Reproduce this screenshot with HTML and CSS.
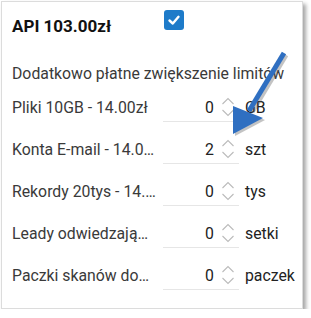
FILE: index.html
```html
<!DOCTYPE html>
<html lang="pl">
<head>
  <meta charset="UTF-8" />
  <title>API</title>
  <link rel="stylesheet" href="styles.css">
</head>
<body>

  <div class="card">
    <div class="head">
      <h2 class="title">API 103.00zł</h2>
      <span class="check">
        <svg width="14" height="14" viewBox="0 0 14 14"><polyline points="2.5,7.5 5.8,10.5 11.5,3.8" fill="none" stroke="#fff" stroke-width="2.4" stroke-linecap="round" stroke-linejoin="round"/></svg>
      </span>
    </div>

    <div class="subtitle">Dodatkowo płatne zwiększenie limitów</div>

    <div class="row">
      <div class="label">Pliki 10GB - 14.00zł</div>
      <div class="field"><span class="value">0</span><span class="spin"></span></div>
      <div class="unit">GB</div>
    </div>
    <div class="row">
      <div class="label">Konta E-mail - 14.00zł</div>
      <div class="field"><span class="value">2</span><span class="spin"></span></div>
      <div class="unit">szt</div>
    </div>
    <div class="row">
      <div class="label">Rekordy 20tys - 14.00zł</div>
      <div class="field"><span class="value">0</span><span class="spin"></span></div>
      <div class="unit">tys</div>
    </div>
    <div class="row">
      <div class="label">Leady odwiedzających - 14.00zł</div>
      <div class="field"><span class="value">0</span><span class="spin"></span></div>
      <div class="unit">setki</div>
    </div>
    <div class="row">
      <div class="label">Paczki skanów dokumentów - 14.00zł</div>
      <div class="field"><span class="value">0</span><span class="spin"></span></div>
      <div class="unit">paczek</div>
    </div>
  </div>

  <!-- annotation arrow drawn over the screenshot -->
  <svg class="arrow" width="311" height="318" viewBox="0 0 311 318">
    <g opacity="0.35" transform="translate(2,2)">
      <line x1="284" y1="53" x2="250" y2="110" stroke="#555" stroke-width="5"/>
      <polygon points="233,106 263,118 233,134" fill="#555"/>
    </g>
    <line x1="284" y1="53" x2="249" y2="111" stroke="#2f6fc1" stroke-width="5"/>
    <polygon points="233,106 263,118 233,134" fill="#2f6fc1"/>
  </svg>

  <script>
    // chevron spinners for each number field
    document.querySelectorAll(".spin").forEach(function (el) {
      el.innerHTML =
        '<svg width="14" height="22" viewBox="0 0 14 22">' +
        '<polyline points="1.5,8 7,2.5 12.5,8" fill="none" stroke="#bbb" stroke-width="1.1"/>' +
        '<polyline points="1.5,14 7,19.5 12.5,14" fill="none" stroke="#bbb" stroke-width="1.1"/>' +
        '</svg>';
    });
  </script>

</body>
</html>
```

FILE: styles.css
```css
body {
  margin: 0;
  font-family: Roboto, "Liberation Sans", sans-serif;
  background: #fff;
  color: #333;
}

.card {
  margin: 1px 0 0 1px;
  width: 302px;
  height: 308px;
  border: 1px solid #dcdcdc;
  box-shadow: 3px 3px 4px rgba(0, 0, 0, 0.35);
  padding-left: 10px;
  box-sizing: border-box;
}

.head {
  display: flex;
  align-items: flex-start;
  height: 50px;
}

.title {
  margin: 14px 0 0 0;
  width: 152px;
  font-size: 17px;
  font-weight: bold;
  color: #111;
}

.check {
  margin-top: 8px;
  width: 20px;
  height: 20px;
  border-radius: 3px;
  background: #1e7bc9;
  display: flex;
  align-items: center;
  justify-content: center;
}

.subtitle {
  margin-top: 12px;
  font-size: 15.8px;
  line-height: 20px;
  color: #3a3a3a;
}

.row {
  display: flex;
  align-items: center;
  height: 42px;
  padding-top: 5px;
  box-sizing: border-box;
  font-size: 15.8px;
}

.row + .row {
  padding-top: 3px;
  margin-top: 2px;
  height: 40px;
}

.label {
  width: 144px;
  white-space: nowrap;
  overflow: hidden;
  text-overflow: ellipsis;
  color: #3a3a3a;
}

.field {
  margin-left: 7px;
  width: 76px;
  height: 28px;
  border-bottom: 1px solid #e6e6e6;
  display: flex;
  align-items: center;
  justify-content: flex-end;
  box-sizing: border-box;
  padding-right: 4px;
}

.value {
  color: #222;
  margin-right: 7px;
}

.spin {
  display: flex;
}

.unit {
  margin-left: 6px;
  color: #222;
}

.arrow {
  position: absolute;
  left: 0;
  top: 0;
}
```
